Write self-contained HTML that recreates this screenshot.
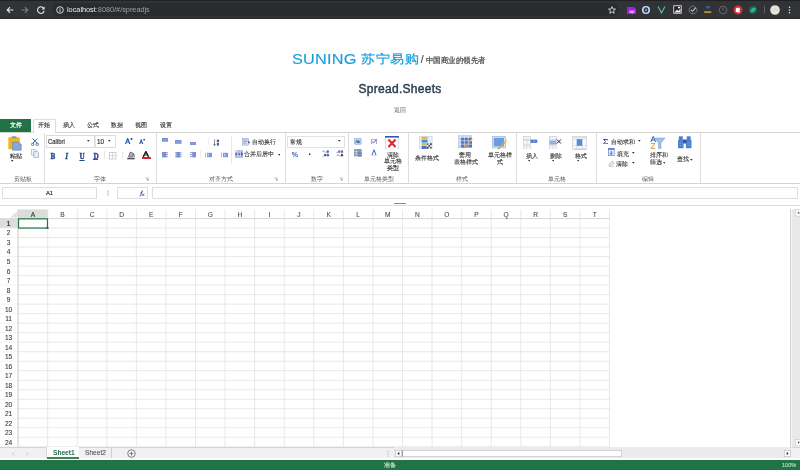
<!DOCTYPE html>
<html><head><meta charset="utf-8">
<style>
*{box-sizing:border-box}
html,body{margin:0;padding:0;width:800px;height:470px;overflow:hidden;background:#fff;font-family:"Liberation Sans",sans-serif}
.a{position:absolute}
.t{position:absolute;white-space:nowrap;line-height:1}
.rb{font-size:6.3px;color:#333;-webkit-text-stroke:0.12px #333}
</style></head><body><div style="position:absolute;left:0;top:0;width:800px;height:470px;overflow:hidden;will-change:transform">
<!-- chrome toolbar -->
<div class="a" style="left:0;top:0;width:800px;height:19px;background:#313336"></div>
<div class="a" style="left:0;top:0;width:800px;height:0.9px;background:#1f2124"></div>
<div class="a" style="left:0;top:18px;width:800px;height:1px;background:#2a2c2f"></div>
<div class="a" style="left:52px;top:3px;width:567px;height:13px;border-radius:6.5px;background:#292c2f"></div>
<svg class="a" style="left:6px;top:6px" width="8" height="8" viewBox="0 0 8 8"><path d="M7.4 4 H1.2 M4 1.2 L1.2 4 L4 6.8" stroke="#e8eaed" stroke-width="1.1" fill="none"/></svg>
<svg class="a" style="left:20.5px;top:6px" width="8" height="8" viewBox="0 0 8 8"><path d="M0.6 4 H6.8 M4 1.2 L6.8 4 L4 6.8" stroke="#7b7e83" stroke-width="1.1" fill="none"/></svg>
<svg class="a" style="left:36.5px;top:6px" width="8" height="8" viewBox="0 0 8 8"><path d="M6.6 2.2 A3.3 3.3 0 1 0 7.1 5" stroke="#e8eaed" stroke-width="1.1" fill="none"/><path d="M7.6 0.4 V3.4 H4.6 Z" fill="#e8eaed"/></svg>
<svg class="a" style="left:55.5px;top:6px" width="8" height="8" viewBox="0 0 8 8"><circle cx="4" cy="4" r="3.3" stroke="#e8eaed" stroke-width="0.9" fill="none"/><path d="M4 3.3 V6" stroke="#e8eaed" stroke-width="0.9"/><circle cx="4" cy="2.2" r="0.5" fill="#e8eaed"/></svg>
<svg class="a" style="left:608px;top:5.5px" width="8" height="8" viewBox="0 0 8 8"><path d="M4 0.6 L5 3 L7.5 3.1 L5.6 4.7 L6.2 7.3 L4 5.9 L1.8 7.3 L2.4 4.7 L0.5 3.1 L3 3 Z" stroke="#e8eaed" stroke-width="0.8" fill="none"/></svg>
<svg class="a" style="left:626px;top:5px" width="11" height="10" viewBox="0 0 11 10"><path d="M1 2 H8 L10 4 V9 H1 Z" fill="#8a2be2"/><rect x="3" y="5" width="6" height="3" fill="#e040fb"/><text x="4" y="7.8" font-size="3" fill="#fff" font-family="Liberation Sans">ap</text></svg>
<svg class="a" style="left:641px;top:4.5px" width="10" height="10" viewBox="0 0 10 10"><circle cx="5" cy="5" r="4" fill="#d5e2ee"/><ellipse cx="5" cy="5" rx="2.4" ry="2.8" fill="#2a3a55"/><ellipse cx="5" cy="5" rx="0.9" ry="1.6" fill="#6aa0e0"/></svg>
<svg class="a" style="left:656.5px;top:5px" width="9" height="9" viewBox="0 0 9 9"><path d="M1 1.5 L4.5 7.8 L8 1.5" stroke="#5cc0a0" stroke-width="1.1" fill="none"/></svg>
<svg class="a" style="left:672.5px;top:5px" width="9" height="9" viewBox="0 0 9 9"><rect x="0.3" y="0.3" width="8.4" height="8.4" fill="#ddd"/><rect x="1.2" y="1.2" width="6.6" height="6.6" fill="#222"/><path d="M1.5 7.5 L4 4.5 L5.5 6 L7.5 3.5 V7.5 Z" fill="#eee"/><rect x="5" y="1.8" width="2" height="1.5" fill="#fff"/></svg>
<svg class="a" style="left:687.5px;top:5px" width="10" height="10" viewBox="0 0 10 10"><path d="M8.6 3.2 A3.9 3.9 0 1 1 6.8 1.4" stroke="#6470c8" stroke-width="1" fill="none"/><path d="M3 4.8 L4.5 6.3 L8 2.4" stroke="#f0cf40" stroke-width="1.1" fill="none"/></svg>
<svg class="a" style="left:702.5px;top:5px" width="10" height="10" viewBox="0 0 10 10"><rect x="3" y="0.8" width="3.6" height="2.6" fill="#3a5a9a"/><rect x="1.2" y="6.2" width="7.2" height="1.8" fill="#b8903a"/></svg>
<svg class="a" style="left:717.5px;top:5px" width="10" height="10" viewBox="0 0 10 10"><circle cx="5" cy="5" r="3.8" stroke="#6b6e73" stroke-width="0.9" fill="none"/><path d="M5 2.6 V5.3" stroke="#6b6e73" stroke-width="0.8"/></svg>
<svg class="a" style="left:733px;top:4.5px" width="10" height="10" viewBox="0 0 10 10"><circle cx="5" cy="5" r="4.5" fill="#d32f2f"/><path d="M2.6 6.6 L3 3.2 L5.2 2.4 L7.4 4 L6.2 5.4 L7.4 7.2 L4.4 7.6 Z" fill="#fff"/></svg>
<svg class="a" style="left:748px;top:4.5px" width="10" height="10" viewBox="0 0 10 10"><circle cx="5" cy="5" r="4.3" fill="#17634c"/><ellipse cx="5" cy="5" rx="3" ry="1.9" transform="rotate(-35 5 5)" fill="#35b487"/></svg>
<div class="a" style="left:764px;top:6px;width:0.7px;height:7px;background:#5f6368"></div>
<svg class="a" style="left:769.5px;top:4.5px" width="10" height="10" viewBox="0 0 10 10"><circle cx="5" cy="5" r="4.8" fill="#e3e3dc"/><path d="M2.5 5.5 L5 3.5 L7.5 5.5" stroke="#c5c5bc" stroke-width="0.6" fill="none"/></svg>
<svg class="a" style="left:788px;top:5.5px" width="3" height="9" viewBox="0 0 3 9"><circle cx="1.5" cy="1.2" r="0.8" fill="#e8eaed"/><circle cx="1.5" cy="4" r="0.8" fill="#e8eaed"/><circle cx="1.5" cy="6.8" r="0.8" fill="#e8eaed"/></svg>
<div class="t" style="left:67px;top:6px;font-size:7.3px;color:#e8eaed">localhost<span style="color:#9aa0a6">:8080/#/spreadjs</span></div>

<!-- page header -->
<div class="t" style="left:292px;top:51.7px;font-size:14px;color:#1a9fdb;letter-spacing:0.2px;transform:scaleX(1.16);transform-origin:0 0;-webkit-text-stroke:0.15px #1a9fdb">SUNING</div>
<div class="t" style="left:360.5px;top:52.5px;font-size:12px;color:#1a9fdb;letter-spacing:0.6px;transform:scaleX(1.17);transform-origin:0 0;-webkit-text-stroke:0.25px #1a9fdb">苏宁易购</div>
<div class="t" style="left:420.8px;top:54.3px;font-size:10.5px;color:#4a4a4a;-webkit-text-stroke:0.15px #4a4a4a">/</div>
<div class="t" style="left:426px;top:56.8px;font-size:7.6px;color:#4a4a4a;transform:scaleX(0.93);transform-origin:0 0;-webkit-text-stroke:0.22px #4a4a4a">中国商业的领先者</div>
<div class="t" style="left:358.5px;top:82.5px;font-size:12px;color:#2c3e50;-webkit-text-stroke:0.45px #2c3e50;letter-spacing:0.28px">Spread.Sheets</div>
<div class="t" style="left:394px;top:106.8px;font-size:6px;color:#888;-webkit-text-stroke:0.1px #888">返回</div>

<!-- ribbon tabs -->
<div class="a" style="left:0;top:119px;width:31px;height:13px;background:#217346"></div>
<div class="t rb" style="left:10px;top:122.1px;color:#fff;-webkit-text-stroke:0.25px #fff">文件</div>
<div class="a" style="left:33px;top:119.3px;width:22.6px;height:14px;border:0.7px solid #dedede;border-bottom:none;background:#fff;z-index:2"></div>
<div class="t rb" style="left:38px;top:122.1px;z-index:3">开始</div>
<div class="t rb" style="left:63px;top:122.1px">插入</div>
<div class="t rb" style="left:87px;top:122.1px">公式</div>
<div class="t rb" style="left:111px;top:122.1px">数据</div>
<div class="t rb" style="left:135px;top:122.1px">视图</div>
<div class="t rb" style="left:159.5px;top:122.1px">设置</div>

<!-- ribbon panel -->
<div class="a" style="left:0;top:132.3px;width:800px;height:51.5px;border-top:0.6px solid #d4d4d4;border-bottom:0.6px solid #d4d4d4"></div>

<div class="a" style="left:43.5px;top:133px;width:0.7px;height:50.5px;background:#dcdcdc"></div>
<div class="a" style="left:155.5px;top:133px;width:0.7px;height:50.5px;background:#dcdcdc"></div>
<div class="a" style="left:284.8px;top:133px;width:0.7px;height:50.5px;background:#dcdcdc"></div>
<div class="a" style="left:348.3px;top:133px;width:0.7px;height:50.5px;background:#dcdcdc"></div>
<div class="a" style="left:407.5px;top:133px;width:0.7px;height:50.5px;background:#dcdcdc"></div>
<div class="a" style="left:515.5px;top:133px;width:0.7px;height:50.5px;background:#dcdcdc"></div>
<div class="a" style="left:595.8px;top:133px;width:0.7px;height:50.5px;background:#dcdcdc"></div>
<div class="a" style="left:700.3px;top:133px;width:0.7px;height:50.5px;background:#dcdcdc"></div>
<div class="t" style="left:14px;top:175.8px;font-size:6.1px;color:#5c5c5c;">剪贴板</div>
<div class="t" style="left:94px;top:175.8px;font-size:6.1px;color:#5c5c5c;">字体</div>
<div class="t" style="left:209px;top:175.8px;font-size:6.1px;color:#5c5c5c;">对齐方式</div>
<div class="t" style="left:311px;top:175.8px;font-size:6.1px;color:#5c5c5c;">数字</div>
<div class="t" style="left:364px;top:175.8px;font-size:6.1px;color:#5c5c5c;">单元格类型</div>
<div class="t" style="left:456px;top:175.8px;font-size:6.1px;color:#5c5c5c;">样式</div>
<div class="t" style="left:548px;top:175.8px;font-size:6.1px;color:#5c5c5c;">单元格</div>
<div class="t" style="left:642px;top:175.8px;font-size:6.1px;color:#5c5c5c;">编辑</div>
<svg class="a" style="left:145px;top:176.5px" width="4" height="4" viewBox="0 0 4 4"><path d="M0.3 0.3 H3.7 V3.7" fill="none" stroke="#b0b0b0" stroke-width="0.5"/><path d="M1 1 L3.2 3.2 M3.2 1.8 V3.2 H1.8" fill="none" stroke="#808080" stroke-width="0.6"/></svg>
<svg class="a" style="left:274px;top:176.5px" width="4" height="4" viewBox="0 0 4 4"><path d="M0.3 0.3 H3.7 V3.7" fill="none" stroke="#b0b0b0" stroke-width="0.5"/><path d="M1 1 L3.2 3.2 M3.2 1.8 V3.2 H1.8" fill="none" stroke="#808080" stroke-width="0.6"/></svg>
<svg class="a" style="left:339px;top:176.5px" width="4" height="4" viewBox="0 0 4 4"><path d="M0.3 0.3 H3.7 V3.7" fill="none" stroke="#b0b0b0" stroke-width="0.5"/><path d="M1 1 L3.2 3.2 M3.2 1.8 V3.2 H1.8" fill="none" stroke="#808080" stroke-width="0.6"/></svg>
<svg class="a" style="left:8px;top:135.5px" width="14" height="15" viewBox="0 0 14 15"><rect x="0.3" y="1.2" width="11.5" height="12" rx="0.8" fill="#f2b71e"/><rect x="3.5" y="0.3" width="5" height="2.2" rx="0.6" fill="#9a9a9a"/><path d="M4.6 6.2 H11 L13.2 8.4 V14.2 H4.6 Z" fill="#8aa6dc" stroke="#5a7cc0" stroke-width="0.6"/><path d="M11 6.2 V8.4 H13.2" fill="#c9d7f0" stroke="#5a7cc0" stroke-width="0.5"/></svg>
<div class="t" style="left:10px;top:152.5px;font-size:6.2px;color:#383838;-webkit-text-stroke:0.12px #383838;">粘贴</div>
<svg class="a" style="left:11.28125px;top:160.3875px" width="2.4375" height="1.625" viewBox="0 0 2.4375 1.625"><path d="M0 0 L2.4375 0 L1.21875 1.625 Z" fill="#333"/></svg>
<svg class="a" style="left:31px;top:137.5px" width="8" height="8" viewBox="0 0 8 8"><path d="M1.5 0.5 L6 5.2 M6.5 0.5 L2 5.2" stroke="#2b5797" stroke-width="0.9" fill="none"/><circle cx="1.7" cy="6.3" r="1.2" fill="none" stroke="#2b5797" stroke-width="0.8"/><circle cx="6.3" cy="6.3" r="1.2" fill="none" stroke="#2b5797" stroke-width="0.8"/></svg>
<svg class="a" style="left:30.5px;top:148.5px" width="8" height="9" viewBox="0 0 8 9"><path d="M0.4 0.4 H4 L5 1.4 V6 H0.4 Z" fill="#f4f6fa" stroke="#8c9bb5" stroke-width="0.6"/><path d="M2.8 2.6 H6.4 L7.5 3.7 V8.4 H2.8 Z" fill="#e9eef8" stroke="#7d8fb0" stroke-width="0.6"/></svg>
<div class="a" style="left:46.3px;top:135.2px;width:49px;height:13.1px;border:0.6px solid #dcdcdc"></div>
<div class="a" style="left:95.1px;top:135.2px;width:20.5px;height:13.1px;border:0.6px solid #dcdcdc;border-left:0.6px solid #e6e6e6"></div>
<div class="t" style="left:48px;top:138.2px;font-size:7.2px;color:#2a2a2a;transform:scaleX(0.82);transform-origin:0 0;-webkit-text-stroke:0.15px #2a2a2a">Calibri</div>
<svg class="a" style="left:86.9875px;top:140.425px" width="2.625" height="1.75" viewBox="0 0 2.625 1.75"><path d="M0 0 L2.625 0 L1.3125 1.75 Z" fill="#333"/></svg>
<div class="t" style="left:97px;top:138.0px;font-size:7px;color:#2a2a2a;transform:scaleX(0.9);transform-origin:0 0;-webkit-text-stroke:0.15px #2a2a2a">10</div>
<svg class="a" style="left:108.1875px;top:140.425px" width="2.625" height="1.75" viewBox="0 0 2.625 1.75"><path d="M0 0 L2.625 0 L1.3125 1.75 Z" fill="#333"/></svg>
<svg class="a" style="left:124.8px;top:137.8px" width="8" height="6.5" viewBox="0 0 8 6.5"><path d="M0.6 6 L2.7 0.6 L4.8 6" fill="none" stroke="#2b5fb4" stroke-width="1.3"/><path d="M1.6 4.2 H3.8" stroke="#2b5fb4" stroke-width="0.8"/><rect x="5.6" y="0.2" width="1.7" height="1.7" fill="#333"/></svg>
<svg class="a" style="left:139.3px;top:138.6px" width="7" height="5.8" viewBox="0 0 7 5.8"><path d="M0.5 5.4 L2.2 0.9 L3.9 5.4" fill="none" stroke="#2b5fb4" stroke-width="1.1"/><path d="M1.3 3.8 H3.1" stroke="#2b5fb4" stroke-width="0.7"/><rect x="4.4" y="0" width="1.5" height="1.4" fill="#333"/></svg>
<div class="t" style="left:50.4px;top:153.8px;font-size:7.2px;color:#26478f;-webkit-text-stroke:0.3px #26478f;font-weight:bold;font-family:&quot;Liberation Serif&quot;,serif">B</div>
<div class="t" style="left:65.2px;top:153.8px;font-size:7.2px;color:#26478f;-webkit-text-stroke:0.3px #26478f;font-weight:bold;font-style:italic;font-family:&quot;Liberation Serif&quot;,serif">I</div>
<div class="t" style="left:79.4px;top:153.8px;font-size:7.2px;color:#26478f;-webkit-text-stroke:0.3px #26478f;font-weight:bold;font-family:&quot;Liberation Serif&quot;,serif;text-decoration:underline">U</div>
<div class="t" style="left:93.4px;top:153.8px;font-size:7.2px;color:#26478f;-webkit-text-stroke:0.3px #26478f;font-weight:bold;font-family:&quot;Liberation Serif&quot;,serif">D</div>
<div class="a" style="left:93px;top:158.6px;width:4.6px;height:0.5px;background:#2b579a"></div>
<div class="a" style="left:103.5px;top:151px;width:0.7px;height:8px;background:#e6e6e6"></div>
<svg class="a" style="left:109px;top:152px" width="7.5" height="7.5" viewBox="0 0 7.5 7.5"><rect x="0.4" y="0.4" width="6.6" height="6.6" fill="none" stroke="#b8c0cc" stroke-width="0.7"/><path d="M3.7 0.4 V7 M0.4 3.7 H7" stroke="#b8c0cc" stroke-width="0.6"/></svg>
<div class="a" style="left:122px;top:151px;width:0.7px;height:8px;background:#e6e6e6"></div>
<svg class="a" style="left:126.5px;top:151.3px" width="8" height="8.5" viewBox="0 0 8 8.5"><path d="M1.5 5.8 L3.2 1 L6.4 2.4 L5.6 6 Z" fill="#aab0ba" stroke="#555a62" stroke-width="0.7"/><path d="M6.4 2.8 Q7.8 4.4 7 6" stroke="#333" stroke-width="0.8" fill="none"/><rect x="0.3" y="6.8" width="7.4" height="1.5" fill="#4a4a4a"/></svg>
<svg class="a" style="left:142px;top:151.3px" width="8" height="6.2" viewBox="0 0 8 6.2"><path d="M1.2 5.9 L3.9 0.6 L6.6 5.9" fill="none" stroke="#151515" stroke-width="1.4"/><path d="M2.4 4 H5.4" stroke="#151515" stroke-width="0.8"/></svg>
<svg class="a" style="left:141.5px;top:157px" width="9" height="2.2" viewBox="0 0 9 2.2"><rect x="0" y="0" width="9" height="2.2" fill="#d9232d"/></svg>
<svg class="a" style="left:161.7px;top:138.2px" width="6.4" height="3.7" viewBox="0 0 6.4 3.7"><rect x="0" y="0" width="6.4" height="3.7" fill="#7b92d1"/><path d="M0.8 1.85 H5.6000000000000005" stroke="#a9b8e4" stroke-width="0.5"/></svg>
<svg class="a" style="left:175.3px;top:140px" width="6.5" height="3.8" viewBox="0 0 6.5 3.8"><rect x="0" y="0" width="6.5" height="3.8" fill="#7b92d1"/><path d="M0.8 1.9 H5.7" stroke="#a9b8e4" stroke-width="0.5"/></svg>
<svg class="a" style="left:189.8px;top:141.5px" width="6.3" height="3.5" viewBox="0 0 6.3 3.5"><rect x="0" y="0" width="6.3" height="3.5" fill="#7b92d1"/><path d="M0.8 1.75 H5.5" stroke="#a9b8e4" stroke-width="0.5"/></svg>
<div class="a" style="left:208px;top:137.5px;width:0.7px;height:7.5px;background:#eee"></div>
<svg class="a" style="left:213px;top:138.5px" width="6.5" height="7" viewBox="0 0 6.5 7"><path d="M1.5 0.5 V6.5 M0.4 5.2 L1.5 6.6 L2.6 5.2" stroke="#555" stroke-width="0.7" fill="none"/><rect x="3.8" y="0.6" width="2.2" height="2.6" fill="#3d62b0"/><rect x="3.8" y="4" width="2.2" height="2.6" fill="#3d62b0"/></svg>
<svg class="a" style="left:161.7px;top:152px" width="6.5" height="5.6" viewBox="0 0 6.5 5.6"><rect x="0" y="0" width="4.3" height="5.4" fill="#7b92d1"/><path d="M4 0.7 H6.5 M4 2.7 H6.5 M4 4.7 H6.5" stroke="#7b92d1" stroke-width="0.9"/></svg>
<svg class="a" style="left:175.3px;top:152px" width="6.6" height="5.6" viewBox="0 0 6.6 5.6"><rect x="1.4" y="0" width="3.8" height="5.4" fill="#7b92d1"/><path d="M0 0.7 H6.6 M0 2.7 H6.6 M0 4.7 H6.6" stroke="#7b92d1" stroke-width="0.9"/></svg>
<svg class="a" style="left:189.6px;top:152px" width="6.5" height="5.6" viewBox="0 0 6.5 5.6"><rect x="2.2" y="0" width="4.3" height="5.4" fill="#7b92d1"/><path d="M0 0.7 H2.5 M0 2.7 H2.5 M0 4.7 H2.5" stroke="#7b92d1" stroke-width="0.9"/></svg>
<div class="a" style="left:199.5px;top:150px;width:0.7px;height:8px;background:#eee"></div>
<svg class="a" style="left:205px;top:151.8px" width="7.5" height="6" viewBox="0 0 7.5 6"><path d="M0.5 0.5 V5.5" stroke="#b59a6a" stroke-width="0.7"/><rect x="2" y="0.8" width="5" height="4.4" fill="#7a98d8"/><path d="M4 2 L2.6 3 L4 4" stroke="#fff" stroke-width="0.6" fill="none"/></svg>
<svg class="a" style="left:220.5px;top:151.8px" width="7.5" height="6" viewBox="0 0 7.5 6"><path d="M0.5 0.5 V5.5" stroke="#b59a6a" stroke-width="0.7"/><rect x="2" y="0.8" width="5" height="4.4" fill="#7a98d8"/><path d="M3 2 L4.4 3 L3 4" stroke="#fff" stroke-width="0.6" fill="none"/></svg>
<div class="a" style="left:231.4px;top:136px;width:0.7px;height:28px;background:#e6e6e6"></div>
<svg class="a" style="left:242px;top:138px" width="8.5" height="7.5" viewBox="0 0 8.5 7.5"><rect x="0.3" y="0.3" width="6" height="6.8" fill="#d5dcef" stroke="#8e9dc5" stroke-width="0.5"/><path d="M1.2 2 H5.4 M1.2 3.6 H5.4 M1.2 5.2 H4" stroke="#6b7fb5" stroke-width="0.5"/><path d="M6.3 3 L8.2 4.2 L6.3 5.4 Z" fill="#333"/></svg>
<div class="t" style="left:252px;top:139.4px;font-size:6.2px;color:#383838;-webkit-text-stroke:0.12px #383838;">自动换行</div>
<svg class="a" style="left:234.8px;top:149.8px" width="8" height="8" viewBox="0 0 8 8"><rect x="0" y="0" width="8" height="8" fill="#aebfe8"/><rect x="0.4" y="0.4" width="2" height="3" fill="#dfe7f8"/><path d="M2.8 0 V8 M5.4 0 V8" stroke="#c9d5f2" stroke-width="0.5"/><rect x="0.6" y="2.6" width="1.3" height="2.6" fill="#555a66"/><rect x="3.6" y="3.4" width="1.3" height="1.5" fill="#2f4a8a"/><rect x="6.2" y="2.6" width="1.3" height="2.8" fill="#2f4a8a"/></svg>
<div class="t" style="left:244px;top:151px;font-size:6.2px;color:#383838;-webkit-text-stroke:0.12px #383838;">合并后居中</div>
<svg class="a" style="left:277.6875px;top:153.825px" width="2.625" height="1.75" viewBox="0 0 2.625 1.75"><path d="M0 0 L2.625 0 L1.3125 1.75 Z" fill="#333"/></svg>
<div class="a" style="left:287.3px;top:135.8px;width:58.2px;height:12.5px;border:0.6px solid #e2e2e2"></div>
<div class="t" style="left:290px;top:138.5px;font-size:6.2px;color:#383838;-webkit-text-stroke:0.12px #383838;">常规</div>
<svg class="a" style="left:338.1875px;top:140.425px" width="2.625" height="1.75" viewBox="0 0 2.625 1.75"><path d="M0 0 L2.625 0 L1.3125 1.75 Z" fill="#333"/></svg>
<div class="t" style="left:291.8px;top:150.6px;font-size:7px;color:#3b5ea8;font-weight:bold">%</div>
<svg class="a" style="left:308.8px;top:152.8px" width="2" height="2.5" viewBox="0 0 2 2.5"><path d="M0 0 L2 1.25 L0 2.5 Z" fill="#333"/></svg>
<svg class="a" style="left:322px;top:150px" width="7.6" height="7" viewBox="0 0 7.6 7"><ellipse cx="1.5" cy="1.3" rx="1" ry="0.8" fill="#9a9460"/><path d="M2.6 2.3 H3.6" stroke="#6a77b8" stroke-width="0.8"/><ellipse cx="5.7" cy="1.7" rx="1.3" ry="1.4" fill="#5d68b8"/><circle cx="1.2" cy="5.9" r="0.5" fill="#555"/><ellipse cx="3.2" cy="5.1" rx="1.2" ry="1.4" fill="#4a5a8a"/><ellipse cx="5.9" cy="5.2" rx="1.2" ry="1.4" fill="#5562b0"/></svg>
<svg class="a" style="left:336px;top:150px" width="7.6" height="7" viewBox="0 0 7.6 7"><path d="M0.4 2.3 H1.6" stroke="#6a77b8" stroke-width="0.8"/><ellipse cx="3.2" cy="1.7" rx="1.2" ry="1.4" fill="#6a72c0"/><ellipse cx="6" cy="1.7" rx="1.2" ry="1.4" fill="#5d68b8"/><ellipse cx="1.7" cy="5.2" rx="1.1" ry="0.8" fill="#a9a25a"/><path d="M3.2 5.8 H4.3" stroke="#6a77b8" stroke-width="0.8"/><ellipse cx="6" cy="5.2" rx="1.2" ry="1.4" fill="#4a5568"/></svg>
<svg class="a" style="left:354.3px;top:138px" width="7.5" height="6.6" viewBox="0 0 7.5 6.6"><rect x="0.3" y="0.3" width="6.9" height="6" rx="0.8" fill="#c6d5f3" stroke="#7b9ad8" stroke-width="0.6"/><path d="M1.8 4.8 L2.8 2.4 L3.8 4.8 M4.2 2.2 V4.8 Q5.8 4.9 5.6 3.6 Q5.4 2.9 4.3 3.4" stroke="#1f3f85" stroke-width="0.7" fill="none"/></svg>
<svg class="a" style="left:370.8px;top:138.8px" width="6" height="5.6" viewBox="0 0 6 5.6"><rect x="0.3" y="0.8" width="5" height="4.5" fill="#fff" stroke="#5f7bb8" stroke-width="0.6"/><path d="M1.2 2.8 L2.5 4 L5.6 0.4" stroke="#233f7a" stroke-width="0.8" fill="none"/></svg>
<svg class="a" style="left:354.2px;top:149.3px" width="7.6" height="7.4" viewBox="0 0 7.6 7.4"><rect x="0" y="0" width="7.6" height="7.4" fill="#8a98b2"/><path d="M0 2.5 H4.5 M0 4.9 H4.5 M2.2 0 V7.4" stroke="#e5e9f2" stroke-width="0.5"/><rect x="4.4" y="3.5" width="3.2" height="3.9" fill="#4c78d0"/><path d="M5.2 5 L6 6 L6.8 5" stroke="#fff" stroke-width="0.5" fill="none"/></svg>
<svg class="a" style="left:371px;top:149.3px" width="6" height="7" viewBox="0 0 6 7"><path d="M1 6.2 L3 0.7 L5 6.2" stroke="#3566c4" stroke-width="1" fill="none"/><path d="M0.4 6.6 H5.6" stroke="#b9c9ea" stroke-width="0.6"/></svg>
<svg class="a" style="left:385px;top:136px" width="14" height="13.4" viewBox="0 0 14 13.4"><rect x="0.3" y="0.3" width="13.4" height="12.8" fill="#fff" stroke="#b8c4d8" stroke-width="0.6"/><rect x="0" y="0" width="14" height="1.6" fill="#2e5aa8"/><path d="M3.4 3.6 L10.6 11 M10.6 3.6 L3.4 11" stroke="#e0262c" stroke-width="2.1"/></svg>
<div class="t" style="left:387px;top:151.6px;font-size:6.2px;color:#383838;-webkit-text-stroke:0.12px #383838;">清除</div>
<div class="t" style="left:384px;top:158.3px;font-size:6.2px;color:#383838;-webkit-text-stroke:0.12px #383838;">单元格</div>
<div class="t" style="left:387px;top:165px;font-size:6.2px;color:#383838;-webkit-text-stroke:0.12px #383838;">类型</div>
<svg class="a" style="left:418.8px;top:135.8px" width="14.5" height="13.6" viewBox="0 0 14.5 13.6"><rect x="0.3" y="0.3" width="12.8" height="12.8" fill="#eaf3fb" stroke="#c4ccd8" stroke-width="0.6"/><rect x="0.6" y="0.8" width="1.8" height="2.6" fill="#f6eab0"/><rect x="2.6" y="0.8" width="6" height="2.6" fill="#dcb45a"/><rect x="0.6" y="3.8" width="1.8" height="2.8" fill="#d6f0fa"/><rect x="2.6" y="3.8" width="6" height="2.8" fill="#4a8ecb"/><rect x="9" y="3.8" width="3.8" height="2.8" fill="#d6ecfa"/><rect x="2.6" y="7.1" width="5" height="2.6" fill="#d8b662"/><rect x="2.6" y="10.1" width="5" height="2.8" fill="#3d6ec4"/><rect x="7.8" y="7.2" width="1.8" height="1.8" fill="#777"/><rect x="11" y="7.2" width="1.8" height="1.8" fill="#444"/><rect x="9.4" y="9" width="1.8" height="1.8" fill="#555"/><rect x="7.8" y="10.8" width="1.8" height="1.8" fill="#333"/><rect x="11" y="10.8" width="1.8" height="1.8" fill="#666"/></svg>
<div class="t" style="left:415px;top:155.2px;font-size:6.2px;color:#383838;-webkit-text-stroke:0.12px #383838;">条件格式</div>
<svg class="a" style="left:457.7px;top:135.4px" width="15" height="13.4" viewBox="0 0 15 13.4"><rect x="0" y="0" width="14" height="12.6" fill="#4a72c6"/><rect x="0" y="0" width="14" height="2.4" fill="#c5d4ee"/><rect x="0" y="2.4" width="2.6" height="10.2" fill="#c5d4ee"/><path d="M0 2.4 H14 M0 5.8 H14 M0 9.2 H14 M2.6 0 V12.6 M6.4 0 V12.6 M10.2 0 V12.6" stroke="#f0f4fc" stroke-width="0.6"/><path d="M6 12.8 L13.8 4.6" stroke="#e3a640" stroke-width="1.3"/><path d="M12.6 5.8 L14.6 3.6" stroke="#f2d36e" stroke-width="1.2"/><path d="M5.2 13.2 L6.6 11.8" stroke="#b88a3a" stroke-width="1.2"/></svg>
<div class="t" style="left:459px;top:152px;font-size:6.2px;color:#383838;-webkit-text-stroke:0.12px #383838;">套用</div>
<div class="t" style="left:453.5px;top:159px;font-size:6.2px;color:#383838;-webkit-text-stroke:0.12px #383838;">表格样式</div>
<svg class="a" style="left:491.9px;top:135.5px" width="15.5" height="13.8" viewBox="0 0 15.5 13.8"><rect x="0.4" y="0.4" width="13" height="11.5" fill="#e4ecf7" stroke="#9fb4d8" stroke-width="0.7"/><rect x="1.7" y="1.8" width="10.4" height="8.7" fill="#6b9de2"/><path d="M6.4 13 L14.4 4.8" stroke="#e3a640" stroke-width="1.3"/><path d="M13.2 6 L15.2 3.8" stroke="#f2d36e" stroke-width="1.2"/><path d="M5.6 13.4 L7 12" stroke="#b88a3a" stroke-width="1.2"/></svg>
<div class="t" style="left:488px;top:152px;font-size:6.2px;color:#383838;-webkit-text-stroke:0.12px #383838;">单元格样</div>
<div class="t" style="left:496.5px;top:159px;font-size:6.2px;color:#383838;-webkit-text-stroke:0.12px #383838;">式</div>
<svg class="a" style="left:523px;top:135.8px" width="14.5" height="13.6" viewBox="0 0 14.5 13.6"><rect x="0.3" y="0.3" width="7" height="3.5" fill="#f3f4f6" stroke="#c3c8d0" stroke-width="0.6"/><rect x="0.3" y="4.5" width="7" height="3.5" fill="#fff" stroke="#c3c8d0" stroke-width="0.6"/><rect x="0.3" y="9" width="7" height="4.3" fill="#eef1f6" stroke="#c3c8d0" stroke-width="0.6"/><path d="M3.8 9 V13.3" stroke="#c3c8d0" stroke-width="0.5"/><path d="M3 6.2 L4.5 6.2" stroke="#e08a3a" stroke-width="0.6"/><rect x="7.5" y="3.6" width="6.8" height="3.3" fill="#4d7fd4"/><path d="M10.9 3.6 V6.9" stroke="#c9d8f2" stroke-width="0.4"/></svg>
<div class="t" style="left:525.5px;top:152.8px;font-size:6.2px;color:#383838;-webkit-text-stroke:0.12px #383838;">插入</div>
<svg class="a" style="left:527.875px;top:160.45px" width="2.25" height="1.5" viewBox="0 0 2.25 1.5"><path d="M0 0 L2.25 0 L1.125 1.5 Z" fill="#333"/></svg>
<svg class="a" style="left:549px;top:135.8px" width="13" height="13.6" viewBox="0 0 13 13.6"><rect x="0.3" y="0.3" width="7" height="3.5" fill="#f3f4f6" stroke="#c3c8d0" stroke-width="0.6"/><rect x="0.3" y="4.5" width="7" height="4" fill="#8fb0e6" stroke="#c3c8d0" stroke-width="0.6"/><rect x="0.3" y="9" width="7" height="4.3" fill="#eef1f6" stroke="#c3c8d0" stroke-width="0.6"/><path d="M3.8 9 V13.3" stroke="#c3c8d0" stroke-width="0.5"/><path d="M7.8 3.4 L12 7.6 M12 3.4 L7.8 7.6" stroke="#111" stroke-width="0.9"/></svg>
<div class="t" style="left:550px;top:152.8px;font-size:6.2px;color:#383838;-webkit-text-stroke:0.12px #383838;">删除</div>
<svg class="a" style="left:551.875px;top:160.45px" width="2.25" height="1.5" viewBox="0 0 2.25 1.5"><path d="M0 0 L2.25 0 L1.125 1.5 Z" fill="#333"/></svg>
<svg class="a" style="left:572px;top:135.8px" width="15.5" height="14.5" viewBox="0 0 15.5 14.5"><rect x="0.3" y="0.3" width="14.5" height="12.6" fill="#f7f8fa" stroke="#c3c8d0" stroke-width="0.6"/><path d="M0.3 3.2 H14.8 M0.3 9.8 H14.8 M4.8 0.3 V12.9 M10.2 0.3 V12.9" stroke="#c3c8d0" stroke-width="0.5"/><rect x="4.8" y="3.2" width="5.4" height="6.6" fill="#4d8ae0"/><path d="M1.5 1.5 h2 M6 1.5 h3 M11 1.5 h2.5" stroke="#e0a3a3" stroke-width="0.5"/><path d="M1.5 13.5 H14" stroke="#9aa3b0" stroke-width="0.5"/></svg>
<div class="t" style="left:575px;top:152.8px;font-size:6.2px;color:#383838;-webkit-text-stroke:0.12px #383838;">格式</div>
<svg class="a" style="left:576.875px;top:160.45px" width="2.25" height="1.5" viewBox="0 0 2.25 1.5"><path d="M0 0 L2.25 0 L1.125 1.5 Z" fill="#333"/></svg>
<svg class="a" style="left:603.2px;top:138.6px" width="5" height="5.4" viewBox="0 0 5 5.4"><path d="M4.6 1.3 V0.5 H0.6 L2.6 2.7 L0.6 4.9 H4.6 V4.1" stroke="#2b4f9a" stroke-width="1" fill="none" stroke-linejoin="miter"/></svg>
<div class="t" style="left:611px;top:138.6px;font-size:6.2px;color:#383838;-webkit-text-stroke:0.12px #383838;">自动求和</div>
<svg class="a" style="left:638.1875px;top:140.425px" width="2.625" height="1.75" viewBox="0 0 2.625 1.75"><path d="M0 0 L2.625 0 L1.3125 1.75 Z" fill="#333"/></svg>
<svg class="a" style="left:608px;top:148px" width="6.5" height="8" viewBox="0 0 6.5 8"><rect x="0.3" y="0.3" width="5.9" height="7.4" fill="#e6eefb" stroke="#4c78d0" stroke-width="0.6"/><rect x="0.3" y="0.3" width="5.9" height="1.5" fill="#4c78d0"/><path d="M3.25 2.8 V6.4 M1.8 5 L3.25 6.4 L4.7 5" stroke="#2d55a8" stroke-width="0.8" fill="none"/></svg>
<div class="t" style="left:617px;top:151px;font-size:6.2px;color:#383838;-webkit-text-stroke:0.12px #383838;">填充</div>
<svg class="a" style="left:632.1875px;top:151.925px" width="2.625" height="1.75" viewBox="0 0 2.625 1.75"><path d="M0 0 L2.625 0 L1.3125 1.75 Z" fill="#333"/></svg>
<svg class="a" style="left:607.5px;top:159.5px" width="7" height="7" viewBox="0 0 7 7"><path d="M0.8 4.8 L4.2 1 L6.4 3 L3 6.4 H1.6 Z" fill="#ece6ee" stroke="#a89aa9" stroke-width="0.6"/><path d="M1.5 6.6 H6" stroke="#b7b7b7" stroke-width="0.5"/></svg>
<div class="t" style="left:616px;top:160.7px;font-size:6.2px;color:#383838;-webkit-text-stroke:0.12px #383838;">清除</div>
<svg class="a" style="left:632.1875px;top:162.325px" width="2.625" height="1.75" viewBox="0 0 2.625 1.75"><path d="M0 0 L2.625 0 L1.3125 1.75 Z" fill="#333"/></svg>
<svg class="a" style="left:649.5px;top:136px" width="15.5" height="13" viewBox="0 0 15.5 13"><path d="M0.8 6 L3.2 0.4 L5.6 6 M1.8 4 H4.6" stroke="#2b5fb4" stroke-width="1" fill="none"/><path d="M1 7.4 H5 L1 12.3 H5.2" stroke="#e0963a" stroke-width="1" fill="none"/><path d="M4.2 2 H15 L11 7 V12.6 H8.4 V7 Z" fill="#9fc0ea" stroke="#6f9bd8" stroke-width="0.5"/></svg>
<div class="t" style="left:649.5px;top:152px;font-size:6.2px;color:#383838;-webkit-text-stroke:0.12px #383838;">排序和</div>
<div class="t" style="left:650px;top:159px;font-size:6.2px;color:#383838;-webkit-text-stroke:0.12px #383838;">筛选</div>
<svg class="a" style="left:662.6875px;top:162.325px" width="2.625" height="1.75" viewBox="0 0 2.625 1.75"><path d="M0 0 L2.625 0 L1.3125 1.75 Z" fill="#333"/></svg>
<svg class="a" style="left:678px;top:136.3px" width="13.5" height="12.5" viewBox="0 0 13.5 12.5"><rect x="0.8" y="0.3" width="4" height="4" fill="#4a7fd0"/><rect x="8.7" y="0.3" width="4" height="4" fill="#4a7fd0"/><rect x="0" y="4" width="5.6" height="8.2" rx="0.6" fill="#4a7fd0"/><rect x="7.9" y="4" width="5.6" height="8.2" rx="0.6" fill="#4a7fd0"/><rect x="5" y="3.5" width="3.5" height="4" fill="#2e5aa8"/><path d="M1 7 H4.6 M8.9 7 H12.5 M1 9.5 H4.6 M8.9 9.5 H12.5" stroke="#8db0e8" stroke-width="0.5"/></svg>
<div class="t" style="left:677px;top:156px;font-size:6.2px;color:#383838;-webkit-text-stroke:0.12px #383838;">查找</div>
<svg class="a" style="left:690.4875px;top:159.425px" width="2.625" height="1.75" viewBox="0 0 2.625 1.75"><path d="M0 0 L2.625 0 L1.3125 1.75 Z" fill="#333"/></svg>

<!-- formula bar -->
<div class="a" style="left:2px;top:187.2px;width:95.3px;height:11.4px;border:0.6px solid #dedede"></div>
<div class="t" style="left:46px;top:191px;font-size:5.8px;color:#333;-webkit-text-stroke:0.2px #333">A1</div>
<div class="a" style="left:117.2px;top:187.2px;width:30.5px;height:11.4px;border:0.6px solid #dedede"></div>
<div class="a" style="left:151.5px;top:187.2px;width:646.2px;height:11.4px;border:0.6px solid #dedede"></div>
<svg class="a" style="left:106.5px;top:189.5px" width="2" height="7" viewBox="0 0 2 7"><rect x="0.6" y="0.7" width="0.8" height="0.9" fill="#555"/><rect x="0.6" y="2.7" width="0.8" height="0.9" fill="#555"/><rect x="0.6" y="4.7" width="0.8" height="0.9" fill="#555"/></svg>
<svg class="a" style="left:139px;top:189.5px" width="7" height="7.5" viewBox="0 0 7 7.5"><g transform="scale(0.82 0.9)"><path d="M0.8 6.8 Q1.9 7 2.3 5.6 L3.3 2 Q3.7 0.6 5 1" stroke="#33539a" stroke-width="1.1" fill="none"/><path d="M1.8 3.2 H4.3" stroke="#33539a" stroke-width="0.8"/><path d="M4.1 4.2 L6.4 6.6 M6.4 4.2 L4.1 6.6" stroke="#33539a" stroke-width="0.9"/></g></svg>
<div class="a" style="left:394.3px;top:202.6px;width:11.4px;height:1.3px;border-radius:0.6px;background:#8a8a8a"></div>
<div class="a" style="left:0;top:205.3px;width:800px;height:0.8px;background:#dcdcdc"></div>

<svg style="position:absolute;left:0;top:0" width="800" height="470" viewBox="0 0 800 470">
<rect x="18.1" y="209.4" width="29.57" height="9.150000000000006" fill="#dcdcdc"/>
<rect x="0" y="218.55" width="17.5" height="9.51" fill="#dcdcdc"/>
<path d="M10.3 217.55 L17.1 217.55 L17.1 211.20000000000002 Z" fill="#e2e2e2"/>
<line x1="18.10" y1="218.55" x2="609.50" y2="218.55" stroke="#dadada" stroke-width="0.6"/>
<line x1="0" y1="218.55" x2="18.10" y2="218.55" stroke="#ececec" stroke-width="0.6"/>
<line x1="18.10" y1="228.06" x2="609.50" y2="228.06" stroke="#dadada" stroke-width="0.6"/>
<line x1="0" y1="228.06" x2="18.10" y2="228.06" stroke="#ececec" stroke-width="0.6"/>
<line x1="18.10" y1="237.57" x2="609.50" y2="237.57" stroke="#dadada" stroke-width="0.6"/>
<line x1="0" y1="237.57" x2="18.10" y2="237.57" stroke="#ececec" stroke-width="0.6"/>
<line x1="18.10" y1="247.08" x2="609.50" y2="247.08" stroke="#dadada" stroke-width="0.6"/>
<line x1="0" y1="247.08" x2="18.10" y2="247.08" stroke="#ececec" stroke-width="0.6"/>
<line x1="18.10" y1="256.59" x2="609.50" y2="256.59" stroke="#dadada" stroke-width="0.6"/>
<line x1="0" y1="256.59" x2="18.10" y2="256.59" stroke="#ececec" stroke-width="0.6"/>
<line x1="18.10" y1="266.10" x2="609.50" y2="266.10" stroke="#dadada" stroke-width="0.6"/>
<line x1="0" y1="266.10" x2="18.10" y2="266.10" stroke="#ececec" stroke-width="0.6"/>
<line x1="18.10" y1="275.61" x2="609.50" y2="275.61" stroke="#dadada" stroke-width="0.6"/>
<line x1="0" y1="275.61" x2="18.10" y2="275.61" stroke="#ececec" stroke-width="0.6"/>
<line x1="18.10" y1="285.12" x2="609.50" y2="285.12" stroke="#dadada" stroke-width="0.6"/>
<line x1="0" y1="285.12" x2="18.10" y2="285.12" stroke="#ececec" stroke-width="0.6"/>
<line x1="18.10" y1="294.63" x2="609.50" y2="294.63" stroke="#dadada" stroke-width="0.6"/>
<line x1="0" y1="294.63" x2="18.10" y2="294.63" stroke="#ececec" stroke-width="0.6"/>
<line x1="18.10" y1="304.14" x2="609.50" y2="304.14" stroke="#dadada" stroke-width="0.6"/>
<line x1="0" y1="304.14" x2="18.10" y2="304.14" stroke="#ececec" stroke-width="0.6"/>
<line x1="18.10" y1="313.65" x2="609.50" y2="313.65" stroke="#dadada" stroke-width="0.6"/>
<line x1="0" y1="313.65" x2="18.10" y2="313.65" stroke="#ececec" stroke-width="0.6"/>
<line x1="18.10" y1="323.16" x2="609.50" y2="323.16" stroke="#dadada" stroke-width="0.6"/>
<line x1="0" y1="323.16" x2="18.10" y2="323.16" stroke="#ececec" stroke-width="0.6"/>
<line x1="18.10" y1="332.67" x2="609.50" y2="332.67" stroke="#dadada" stroke-width="0.6"/>
<line x1="0" y1="332.67" x2="18.10" y2="332.67" stroke="#ececec" stroke-width="0.6"/>
<line x1="18.10" y1="342.18" x2="609.50" y2="342.18" stroke="#dadada" stroke-width="0.6"/>
<line x1="0" y1="342.18" x2="18.10" y2="342.18" stroke="#ececec" stroke-width="0.6"/>
<line x1="18.10" y1="351.69" x2="609.50" y2="351.69" stroke="#dadada" stroke-width="0.6"/>
<line x1="0" y1="351.69" x2="18.10" y2="351.69" stroke="#ececec" stroke-width="0.6"/>
<line x1="18.10" y1="361.20" x2="609.50" y2="361.20" stroke="#dadada" stroke-width="0.6"/>
<line x1="0" y1="361.20" x2="18.10" y2="361.20" stroke="#ececec" stroke-width="0.6"/>
<line x1="18.10" y1="370.71" x2="609.50" y2="370.71" stroke="#dadada" stroke-width="0.6"/>
<line x1="0" y1="370.71" x2="18.10" y2="370.71" stroke="#ececec" stroke-width="0.6"/>
<line x1="18.10" y1="380.22" x2="609.50" y2="380.22" stroke="#dadada" stroke-width="0.6"/>
<line x1="0" y1="380.22" x2="18.10" y2="380.22" stroke="#ececec" stroke-width="0.6"/>
<line x1="18.10" y1="389.73" x2="609.50" y2="389.73" stroke="#dadada" stroke-width="0.6"/>
<line x1="0" y1="389.73" x2="18.10" y2="389.73" stroke="#ececec" stroke-width="0.6"/>
<line x1="18.10" y1="399.24" x2="609.50" y2="399.24" stroke="#dadada" stroke-width="0.6"/>
<line x1="0" y1="399.24" x2="18.10" y2="399.24" stroke="#ececec" stroke-width="0.6"/>
<line x1="18.10" y1="408.75" x2="609.50" y2="408.75" stroke="#dadada" stroke-width="0.6"/>
<line x1="0" y1="408.75" x2="18.10" y2="408.75" stroke="#ececec" stroke-width="0.6"/>
<line x1="18.10" y1="418.26" x2="609.50" y2="418.26" stroke="#dadada" stroke-width="0.6"/>
<line x1="0" y1="418.26" x2="18.10" y2="418.26" stroke="#ececec" stroke-width="0.6"/>
<line x1="18.10" y1="427.77" x2="609.50" y2="427.77" stroke="#dadada" stroke-width="0.6"/>
<line x1="0" y1="427.77" x2="18.10" y2="427.77" stroke="#ececec" stroke-width="0.6"/>
<line x1="18.10" y1="437.28" x2="609.50" y2="437.28" stroke="#dadada" stroke-width="0.6"/>
<line x1="0" y1="437.28" x2="18.10" y2="437.28" stroke="#ececec" stroke-width="0.6"/>
<line x1="18.10" y1="446.79" x2="609.50" y2="446.79" stroke="#dadada" stroke-width="0.6"/>
<line x1="0" y1="446.79" x2="18.10" y2="446.79" stroke="#ececec" stroke-width="0.6"/>
<line x1="18.10" y1="209.4" x2="18.10" y2="446.79" stroke="#dadada" stroke-width="0.6"/>
<line x1="47.67" y1="209.4" x2="47.67" y2="446.79" stroke="#dadada" stroke-width="0.6"/>
<line x1="77.24" y1="209.4" x2="77.24" y2="446.79" stroke="#dadada" stroke-width="0.6"/>
<line x1="106.81" y1="209.4" x2="106.81" y2="446.79" stroke="#dadada" stroke-width="0.6"/>
<line x1="136.38" y1="209.4" x2="136.38" y2="446.79" stroke="#dadada" stroke-width="0.6"/>
<line x1="165.95" y1="209.4" x2="165.95" y2="446.79" stroke="#dadada" stroke-width="0.6"/>
<line x1="195.52" y1="209.4" x2="195.52" y2="446.79" stroke="#dadada" stroke-width="0.6"/>
<line x1="225.09" y1="209.4" x2="225.09" y2="446.79" stroke="#dadada" stroke-width="0.6"/>
<line x1="254.66" y1="209.4" x2="254.66" y2="446.79" stroke="#dadada" stroke-width="0.6"/>
<line x1="284.23" y1="209.4" x2="284.23" y2="446.79" stroke="#dadada" stroke-width="0.6"/>
<line x1="313.80" y1="209.4" x2="313.80" y2="446.79" stroke="#dadada" stroke-width="0.6"/>
<line x1="343.37" y1="209.4" x2="343.37" y2="446.79" stroke="#dadada" stroke-width="0.6"/>
<line x1="372.94" y1="209.4" x2="372.94" y2="446.79" stroke="#dadada" stroke-width="0.6"/>
<line x1="402.51" y1="209.4" x2="402.51" y2="446.79" stroke="#dadada" stroke-width="0.6"/>
<line x1="432.08" y1="209.4" x2="432.08" y2="446.79" stroke="#dadada" stroke-width="0.6"/>
<line x1="461.65" y1="209.4" x2="461.65" y2="446.79" stroke="#dadada" stroke-width="0.6"/>
<line x1="491.22" y1="209.4" x2="491.22" y2="446.79" stroke="#dadada" stroke-width="0.6"/>
<line x1="520.79" y1="209.4" x2="520.79" y2="446.79" stroke="#dadada" stroke-width="0.6"/>
<line x1="550.36" y1="209.4" x2="550.36" y2="446.79" stroke="#dadada" stroke-width="0.6"/>
<line x1="579.93" y1="209.4" x2="579.93" y2="446.79" stroke="#dadada" stroke-width="0.6"/>
<line x1="609.50" y1="209.4" x2="609.50" y2="446.79" stroke="#dadada" stroke-width="0.6"/>
<line x1="0" y1="218.55" x2="609.50" y2="218.55" stroke="#d0d0d0" stroke-width="0.7"/>
<line x1="18.10" y1="209.4" x2="18.10" y2="446.79" stroke="#c8c8c8" stroke-width="0.7"/>
<rect x="18.5" y="218.85000000000002" width="28.97" height="9.209999999999999" fill="none" stroke="#217346" stroke-width="1.2"/>
<rect x="46.47" y="226.96" width="2" height="2" fill="#217346"/>
<text x="32.89" y="216.6" text-anchor="middle" font-size="6.6" fill="#2a4636" stroke="#2a4636" stroke-width="0.18" font-family="Liberation Sans">A</text>
<text x="62.45" y="216.6" text-anchor="middle" font-size="6.6" fill="#484848" stroke="#484848" stroke-width="0.08" font-family="Liberation Sans">B</text>
<text x="92.03" y="216.6" text-anchor="middle" font-size="6.6" fill="#484848" stroke="#484848" stroke-width="0.08" font-family="Liberation Sans">C</text>
<text x="121.59" y="216.6" text-anchor="middle" font-size="6.6" fill="#484848" stroke="#484848" stroke-width="0.08" font-family="Liberation Sans">D</text>
<text x="151.16" y="216.6" text-anchor="middle" font-size="6.6" fill="#484848" stroke="#484848" stroke-width="0.08" font-family="Liberation Sans">E</text>
<text x="180.73" y="216.6" text-anchor="middle" font-size="6.6" fill="#484848" stroke="#484848" stroke-width="0.08" font-family="Liberation Sans">F</text>
<text x="210.31" y="216.6" text-anchor="middle" font-size="6.6" fill="#484848" stroke="#484848" stroke-width="0.08" font-family="Liberation Sans">G</text>
<text x="239.88" y="216.6" text-anchor="middle" font-size="6.6" fill="#484848" stroke="#484848" stroke-width="0.08" font-family="Liberation Sans">H</text>
<text x="269.44" y="216.6" text-anchor="middle" font-size="6.6" fill="#484848" stroke="#484848" stroke-width="0.08" font-family="Liberation Sans">I</text>
<text x="299.02" y="216.6" text-anchor="middle" font-size="6.6" fill="#484848" stroke="#484848" stroke-width="0.08" font-family="Liberation Sans">J</text>
<text x="328.59" y="216.6" text-anchor="middle" font-size="6.6" fill="#484848" stroke="#484848" stroke-width="0.08" font-family="Liberation Sans">K</text>
<text x="358.16" y="216.6" text-anchor="middle" font-size="6.6" fill="#484848" stroke="#484848" stroke-width="0.08" font-family="Liberation Sans">L</text>
<text x="387.73" y="216.6" text-anchor="middle" font-size="6.6" fill="#484848" stroke="#484848" stroke-width="0.08" font-family="Liberation Sans">M</text>
<text x="417.30" y="216.6" text-anchor="middle" font-size="6.6" fill="#484848" stroke="#484848" stroke-width="0.08" font-family="Liberation Sans">N</text>
<text x="446.87" y="216.6" text-anchor="middle" font-size="6.6" fill="#484848" stroke="#484848" stroke-width="0.08" font-family="Liberation Sans">O</text>
<text x="476.44" y="216.6" text-anchor="middle" font-size="6.6" fill="#484848" stroke="#484848" stroke-width="0.08" font-family="Liberation Sans">P</text>
<text x="506.01" y="216.6" text-anchor="middle" font-size="6.6" fill="#484848" stroke="#484848" stroke-width="0.08" font-family="Liberation Sans">Q</text>
<text x="535.57" y="216.6" text-anchor="middle" font-size="6.6" fill="#484848" stroke="#484848" stroke-width="0.08" font-family="Liberation Sans">R</text>
<text x="565.14" y="216.6" text-anchor="middle" font-size="6.6" fill="#484848" stroke="#484848" stroke-width="0.08" font-family="Liberation Sans">S</text>
<text x="594.72" y="216.6" text-anchor="middle" font-size="6.6" fill="#484848" stroke="#484848" stroke-width="0.08" font-family="Liberation Sans">T</text>
<text x="8.6" y="225.95" text-anchor="middle" font-size="6.6" fill="#222" stroke="#222" stroke-width="0.18" font-family="Liberation Sans">1</text>
<text x="8.6" y="235.46" text-anchor="middle" font-size="6.6" fill="#3a3a3a" stroke="#3a3a3a" stroke-width="0.1" font-family="Liberation Sans">2</text>
<text x="8.6" y="244.97" text-anchor="middle" font-size="6.6" fill="#3a3a3a" stroke="#3a3a3a" stroke-width="0.1" font-family="Liberation Sans">3</text>
<text x="8.6" y="254.48" text-anchor="middle" font-size="6.6" fill="#3a3a3a" stroke="#3a3a3a" stroke-width="0.1" font-family="Liberation Sans">4</text>
<text x="8.6" y="263.99" text-anchor="middle" font-size="6.6" fill="#3a3a3a" stroke="#3a3a3a" stroke-width="0.1" font-family="Liberation Sans">5</text>
<text x="8.6" y="273.50" text-anchor="middle" font-size="6.6" fill="#3a3a3a" stroke="#3a3a3a" stroke-width="0.1" font-family="Liberation Sans">6</text>
<text x="8.6" y="283.01" text-anchor="middle" font-size="6.6" fill="#3a3a3a" stroke="#3a3a3a" stroke-width="0.1" font-family="Liberation Sans">7</text>
<text x="8.6" y="292.52" text-anchor="middle" font-size="6.6" fill="#3a3a3a" stroke="#3a3a3a" stroke-width="0.1" font-family="Liberation Sans">8</text>
<text x="8.6" y="302.03" text-anchor="middle" font-size="6.6" fill="#3a3a3a" stroke="#3a3a3a" stroke-width="0.1" font-family="Liberation Sans">9</text>
<text x="8.6" y="311.54" text-anchor="middle" font-size="6.6" fill="#3a3a3a" stroke="#3a3a3a" stroke-width="0.1" font-family="Liberation Sans">10</text>
<text x="8.6" y="321.05" text-anchor="middle" font-size="6.6" fill="#3a3a3a" stroke="#3a3a3a" stroke-width="0.1" font-family="Liberation Sans">11</text>
<text x="8.6" y="330.56" text-anchor="middle" font-size="6.6" fill="#3a3a3a" stroke="#3a3a3a" stroke-width="0.1" font-family="Liberation Sans">12</text>
<text x="8.6" y="340.07" text-anchor="middle" font-size="6.6" fill="#3a3a3a" stroke="#3a3a3a" stroke-width="0.1" font-family="Liberation Sans">13</text>
<text x="8.6" y="349.58" text-anchor="middle" font-size="6.6" fill="#3a3a3a" stroke="#3a3a3a" stroke-width="0.1" font-family="Liberation Sans">14</text>
<text x="8.6" y="359.09" text-anchor="middle" font-size="6.6" fill="#3a3a3a" stroke="#3a3a3a" stroke-width="0.1" font-family="Liberation Sans">15</text>
<text x="8.6" y="368.60" text-anchor="middle" font-size="6.6" fill="#3a3a3a" stroke="#3a3a3a" stroke-width="0.1" font-family="Liberation Sans">16</text>
<text x="8.6" y="378.11" text-anchor="middle" font-size="6.6" fill="#3a3a3a" stroke="#3a3a3a" stroke-width="0.1" font-family="Liberation Sans">17</text>
<text x="8.6" y="387.62" text-anchor="middle" font-size="6.6" fill="#3a3a3a" stroke="#3a3a3a" stroke-width="0.1" font-family="Liberation Sans">18</text>
<text x="8.6" y="397.13" text-anchor="middle" font-size="6.6" fill="#3a3a3a" stroke="#3a3a3a" stroke-width="0.1" font-family="Liberation Sans">19</text>
<text x="8.6" y="406.64" text-anchor="middle" font-size="6.6" fill="#3a3a3a" stroke="#3a3a3a" stroke-width="0.1" font-family="Liberation Sans">20</text>
<text x="8.6" y="416.15" text-anchor="middle" font-size="6.6" fill="#3a3a3a" stroke="#3a3a3a" stroke-width="0.1" font-family="Liberation Sans">21</text>
<text x="8.6" y="425.66" text-anchor="middle" font-size="6.6" fill="#3a3a3a" stroke="#3a3a3a" stroke-width="0.1" font-family="Liberation Sans">22</text>
<text x="8.6" y="435.17" text-anchor="middle" font-size="6.6" fill="#3a3a3a" stroke="#3a3a3a" stroke-width="0.1" font-family="Liberation Sans">23</text>
<text x="8.6" y="444.68" text-anchor="middle" font-size="6.6" fill="#3a3a3a" stroke="#3a3a3a" stroke-width="0.1" font-family="Liberation Sans">24</text>
</svg>

<!-- scrollbar vertical -->
<div class="a" style="left:789.6px;top:209.4px;width:11px;height:237.2px;background:#e9e9e9;border-left:0.9px solid #d2d2d2"></div>
<div class="a" style="left:790.5px;top:209.4px;width:1.3px;height:237.2px;background:#f6f6f6"></div>
<!-- tab strip -->
<div class="a" style="left:0;top:446.6px;width:800px;height:11.2px;background:#f1f1f1;border-top:0.6px solid #d6d6d6"></div>
<div class="a" style="left:46.2px;top:446.5px;width:0.6px;height:11.3px;background:#d8d8d8"></div>
<div class="a" style="left:47px;top:446.9px;width:32px;height:11.8px;background:#fff"></div>
<div class="a" style="left:47px;top:457.2px;width:32px;height:1.6px;background:#4d7d5e"></div>
<div class="a" style="left:111.3px;top:447.5px;width:0.7px;height:10px;background:#d0d0d0"></div>
<div class="t" style="left:53px;top:449.8px;font-size:6.6px;font-weight:bold;color:#217346">Sheet1</div>
<div class="t" style="left:85px;top:449.8px;font-size:6.6px;color:#555;-webkit-text-stroke:0.1px #555">Sheet2</div>
<div class="a" style="left:394px;top:447.4px;width:397px;height:10.4px;background:#ebebeb"></div>
<div class="a" style="left:401.5px;top:450.2px;width:220.5px;height:6.4px;background:#fdfdfd;border:0.6px solid #d2d2d2;border-left:0.8px solid #999"></div>
<svg class="a" style="left:12px;top:452px" width="3" height="3.5" viewBox="0 0 3 3.5"><path d="M2.5 0.3 L0.5 1.75 L2.5 3.2" stroke="#bbb" stroke-width="0.6" fill="none"/></svg>
<svg class="a" style="left:25.5px;top:452px" width="3" height="3.5" viewBox="0 0 3 3.5"><path d="M0.5 0.3 L2.5 1.75 L0.5 3.2" stroke="#bbb" stroke-width="0.6" fill="none"/></svg>
<svg class="a" style="left:127px;top:448.5px" width="9" height="9" viewBox="0 0 9 9"><circle cx="4.5" cy="4.5" r="3.8" stroke="#555" stroke-width="0.7" fill="none"/><path d="M2.5 4.5 H6.5 M4.5 2.5 V6.5" stroke="#555" stroke-width="0.7"/></svg>
<svg class="a" style="left:387px;top:449.5px" width="2" height="7" viewBox="0 0 2 7"><circle cx="1" cy="1.5" r="0.5" fill="#888"/><circle cx="1" cy="3.7" r="0.5" fill="#888"/><circle cx="1" cy="5.9" r="0.5" fill="#888"/></svg>
<svg class="a" style="left:395px;top:449.5px" width="7" height="7" viewBox="0 0 7 7"><rect x="0.3" y="0.3" width="6.4" height="6.4" fill="#fff" stroke="#bbb" stroke-width="0.6"/><path d="M4.3 1.8 L2.3 3.5 L4.3 5.2 Z" fill="#333"/></svg>
<svg class="a" style="left:784px;top:449.5px" width="7" height="7" viewBox="0 0 7 7"><rect x="0.3" y="0.3" width="6.4" height="6.4" fill="#fff" stroke="#bbb" stroke-width="0.6"/><path d="M2.7 1.8 L4.7 3.5 L2.7 5.2 Z" fill="#333"/></svg>
<svg class="a" style="left:795px;top:209.3px" width="6" height="7.4" viewBox="0 0 6 7.4"><rect x="0.3" y="0.3" width="6.4" height="6.8" fill="#fff" stroke="#c4c4c4" stroke-width="0.6"/><path d="M2.4 4.6 L3.6 2.6 L4.8 4.6 Z" fill="#444"/></svg>
<svg class="a" style="left:795px;top:439px" width="6" height="7.2" viewBox="0 0 6 7.2"><rect x="0.3" y="0.3" width="6.4" height="6.6" fill="#fff" stroke="#c4c4c4" stroke-width="0.6"/><path d="M2.4 2.7 L3.6 4.7 L4.8 2.7 Z" fill="#444"/></svg>
<!-- status bar -->
<div class="a" style="left:0;top:459.5px;width:800px;height:10.5px;background:#217346"></div>
<div class="t" style="left:384px;top:462px;font-size:6px;color:#b9dfc4;-webkit-text-stroke:0.2px #b9dfc4">准备</div>
<div class="t" style="left:782px;top:462.6px;font-size:5.6px;color:#b9dfc4;-webkit-text-stroke:0.15px #b9dfc4">100%</div>
</div></body></html>
